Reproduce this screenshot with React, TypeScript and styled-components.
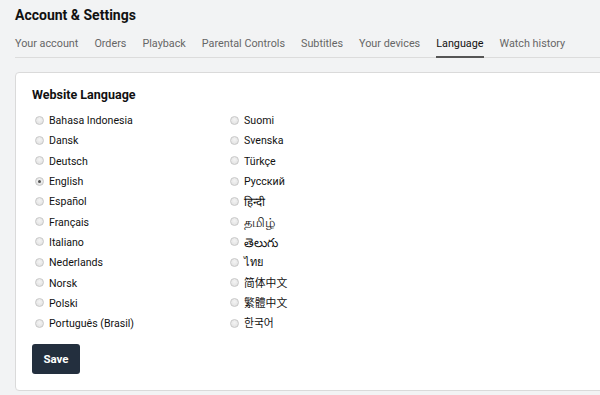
import React, { useState } from "react";
import styled, { createGlobalStyle } from "styled-components";

const Global = createGlobalStyle`
  html, body { margin: 0; padding: 0; background: #f2f3f4; }
  body { font-family: Roboto, "Liberation Sans", Arial, "Noto Sans CJK SC", sans-serif; color: #111; overflow: hidden; }
  * { box-sizing: border-box; }
`;

const Page = styled.div`
  padding: 7px 0 0 15px;
  width: 600px;
  height: 395px;
  overflow: hidden;
`;

const Title = styled.h1`
  margin: 0;
  font-size: 14px;
  line-height: 16px;
  font-weight: 700;
  color: #111;
`;

const Tabs = styled.nav`
  display: flex;
  gap: 16px;
  margin-top: 13px;
  border-bottom: 1px solid #dcdcdc;
`;

const Tab = styled.a<{ $active?: boolean }>`
  font-size: 10.8px;
  line-height: 16px;
  padding: 0 0 4px;
  margin-bottom: -1px;
  color: ${(p) => (p.$active ? "#111" : "#666")};
  border-bottom: 2px solid ${(p) => (p.$active ? "#555" : "transparent")};
  white-space: nowrap;
  cursor: pointer;
`;

const Card = styled.section`
  margin-top: 14px;
  margin-right: -20px;
  background: #fff;
  border: 1px solid #dadada;
  border-radius: 4px;
  padding: 13px 16px 16px;
`;

const Heading = styled.h2`
  margin: 0 0 7px;
  font-size: 12.5px;
  line-height: 18px;
  font-weight: 700;
  color: #111;
`;

const Columns = styled.div`
  display: grid;
  grid-template-columns: 195px 195px;
`;

const Column = styled.div`
  display: flex;
  flex-direction: column;
`;

const Option = styled.label`
  display: flex;
  align-items: center;
  height: 20.3px;
  font-size: 10.6px;
  color: #111;
  cursor: pointer;
`;

const LabelText = styled.span<{ $size?: number }>`
  font-size: ${(p) => (p.$size ? `${p.$size}px` : "inherit")};
  line-height: 14px;
`;

const Dot = styled.span<{ $checked?: boolean }>`
  width: 9px;
  height: 9px;
  margin: 0 5px 0 3px;
  border-radius: 50%;
  border: 1px solid #c8c8c8;
  background: radial-gradient(circle at 50% 40%, #f4f4f4 0%, #dedede 100%);
  display: flex;
  align-items: center;
  justify-content: center;
  flex: none;
  position: relative;
  top: -1px;
  &::after {
    content: "";
    width: 3px;
    height: 3px;
    border-radius: 50%;
    background: #555;
    display: ${(p) => (p.$checked ? "block" : "none")};
  }
`;

const SaveButton = styled.button`
  margin-top: 10px;
  width: 48px;
  height: 30px;
  border: none;
  border-radius: 3px;
  background: #232f3e;
  color: #fff;
  font-family: inherit;
  font-size: 11.5px;
  font-weight: 700;
  cursor: pointer;
`;

const tabs = [
  "Your account",
  "Orders",
  "Playback",
  "Parental Controls",
  "Subtitles",
  "Your devices",
  "Language",
  "Watch history",
];

type Lang = { name: string; size?: number };

const col1: Lang[] = [
  { name: "Bahasa Indonesia" },
  { name: "Dansk" },
  { name: "Deutsch" },
  { name: "English" },
  { name: "Español" },
  { name: "Français" },
  { name: "Italiano" },
  { name: "Nederlands" },
  { name: "Norsk" },
  { name: "Polski" },
  { name: "Português (Brasil)" },
];

const col2: Lang[] = [
  { name: "Suomi" },
  { name: "Svenska" },
  { name: "Türkçe" },
  { name: "Русский" },
  { name: "हिन्दी", size: 11.5 },
  { name: "தமிழ்", size: 13 },
  { name: "తెలుగు", size: 12.5 },
  { name: "ไทย", size: 11 },
  { name: "简体中文", size: 10.8 },
  { name: "繁體中文", size: 10.8 },
  { name: "한국어", size: 10.8 },
];

export default function App() {
  const [lang, setLang] = useState("English");
  const renderCol = (items: Lang[]) => (
    <Column>
      {items.map((l) => (
        <Option key={l.name} onClick={() => setLang(l.name)}>
          <Dot $checked={lang === l.name} />
          <LabelText $size={l.size}>{l.name}</LabelText>
        </Option>
      ))}
    </Column>
  );
  return (
    <>
      <Global />
      <Page>
        <Title>Account &amp; Settings</Title>
        <Tabs>
          {tabs.map((t) => (
            <Tab key={t} $active={t === "Language"}>
              {t}
            </Tab>
          ))}
        </Tabs>
        <Card>
          <Heading>Website Language</Heading>
          <Columns>
            {renderCol(col1)}
            {renderCol(col2)}
          </Columns>
          <SaveButton>Save</SaveButton>
        </Card>
      </Page>
    </>
  );
}
